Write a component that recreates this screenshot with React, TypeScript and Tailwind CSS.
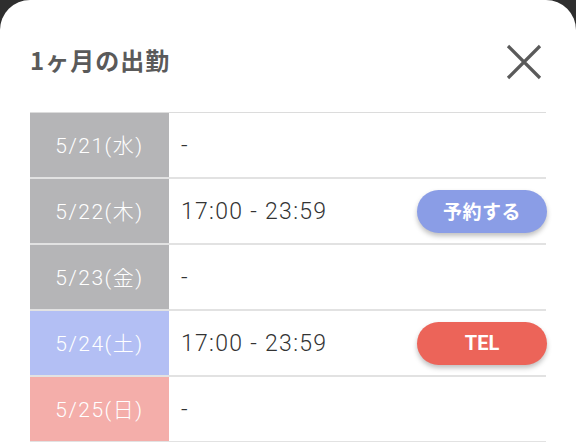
type Row = { date: string; time: string; tone: 'gray' | 'blue' | 'pink'; action?: 'reserve' | 'tel' };

const rows: Row[] = [
    { date: '5/21(水)', time: '-', tone: 'gray' },
    { date: '5/22(木)', time: '17:00 - 23:59', tone: 'gray', action: 'reserve' },
    { date: '5/23(金)', time: '-', tone: 'gray' },
    { date: '5/24(土)', time: '17:00 - 23:59', tone: 'blue', action: 'tel' },
    { date: '5/25(日)', time: '-', tone: 'pink' },
];

const toneClass = {
    gray: 'bg-[#b5b5b7]',
    blue: 'bg-[#b3bff4]',
    pink: 'bg-[#f4aeaa]',
};

const latin = { fontFamily: 'Roboto, "Noto Sans CJK JP", sans-serif' };

export default function App() {
    return (
        <div
            className="w-[576px] h-[442px] bg-[#2e2e2e] overflow-hidden"
            style={{ fontFamily: '"Noto Sans CJK JP", "Noto Sans", sans-serif' }}
        >
            <div className="h-full bg-white rounded-t-[30px] px-[30px]">
                <div className="flex items-center justify-between h-[112px] pt-[12px]">
                    <h2 className="text-[24px] font-bold text-[#5a5a5a] tracking-[1px] -mt-[5px]">1ヶ月の出勤</h2>
                    <svg width="36" height="36" viewBox="0 0 36 36" className="text-[#5a5a5a] mr-[4px]">
                        <path d="M2 2 L34 34 M34 2 L2 34" stroke="currentColor" strokeWidth="3.2" fill="none" />
                    </svg>
                </div>
                <div className="border-t border-[#dcdcdc]">
                    {rows.map((r) => (
                        <div key={r.date} className="flex h-[66px] border-b-2 border-[#e2e2e2]">
                            <div
                                className={`w-[139px] shrink-0 flex items-center justify-center pt-[3px] text-white text-[21px] font-light tracking-[1.5px] ${toneClass[r.tone]}`}
                                style={latin}
                            >
                                {r.date}
                            </div>
                            <div className="flex-1 flex items-center justify-between pl-[12px]">
                                <span className="pt-[3px] text-[23px] text-[#333] font-light tracking-[1.3px]" style={latin}>
                                    {r.time}
                                </span>
                                {r.action === 'reserve' && (
                                    <button className="w-[130px] h-[43px] -mr-[1px] rounded-full bg-[#8a9de6] text-white text-[19px] font-bold tracking-[0.5px] shadow-[0_3px_5px_rgba(0,0,0,0.25)]">
                                        予約する
                                    </button>
                                )}
                                {r.action === 'tel' && (
                                    <button
                                        className="w-[130px] h-[43px] -mr-[1px] rounded-full bg-[#ec6459] text-white text-[20px] font-bold shadow-[0_3px_5px_rgba(0,0,0,0.25)]"
                                        style={latin}
                                    >
                                        TEL
                                    </button>
                                )}
                            </div>
                        </div>
                    ))}
                </div>
            </div>
        </div>
    );
}
